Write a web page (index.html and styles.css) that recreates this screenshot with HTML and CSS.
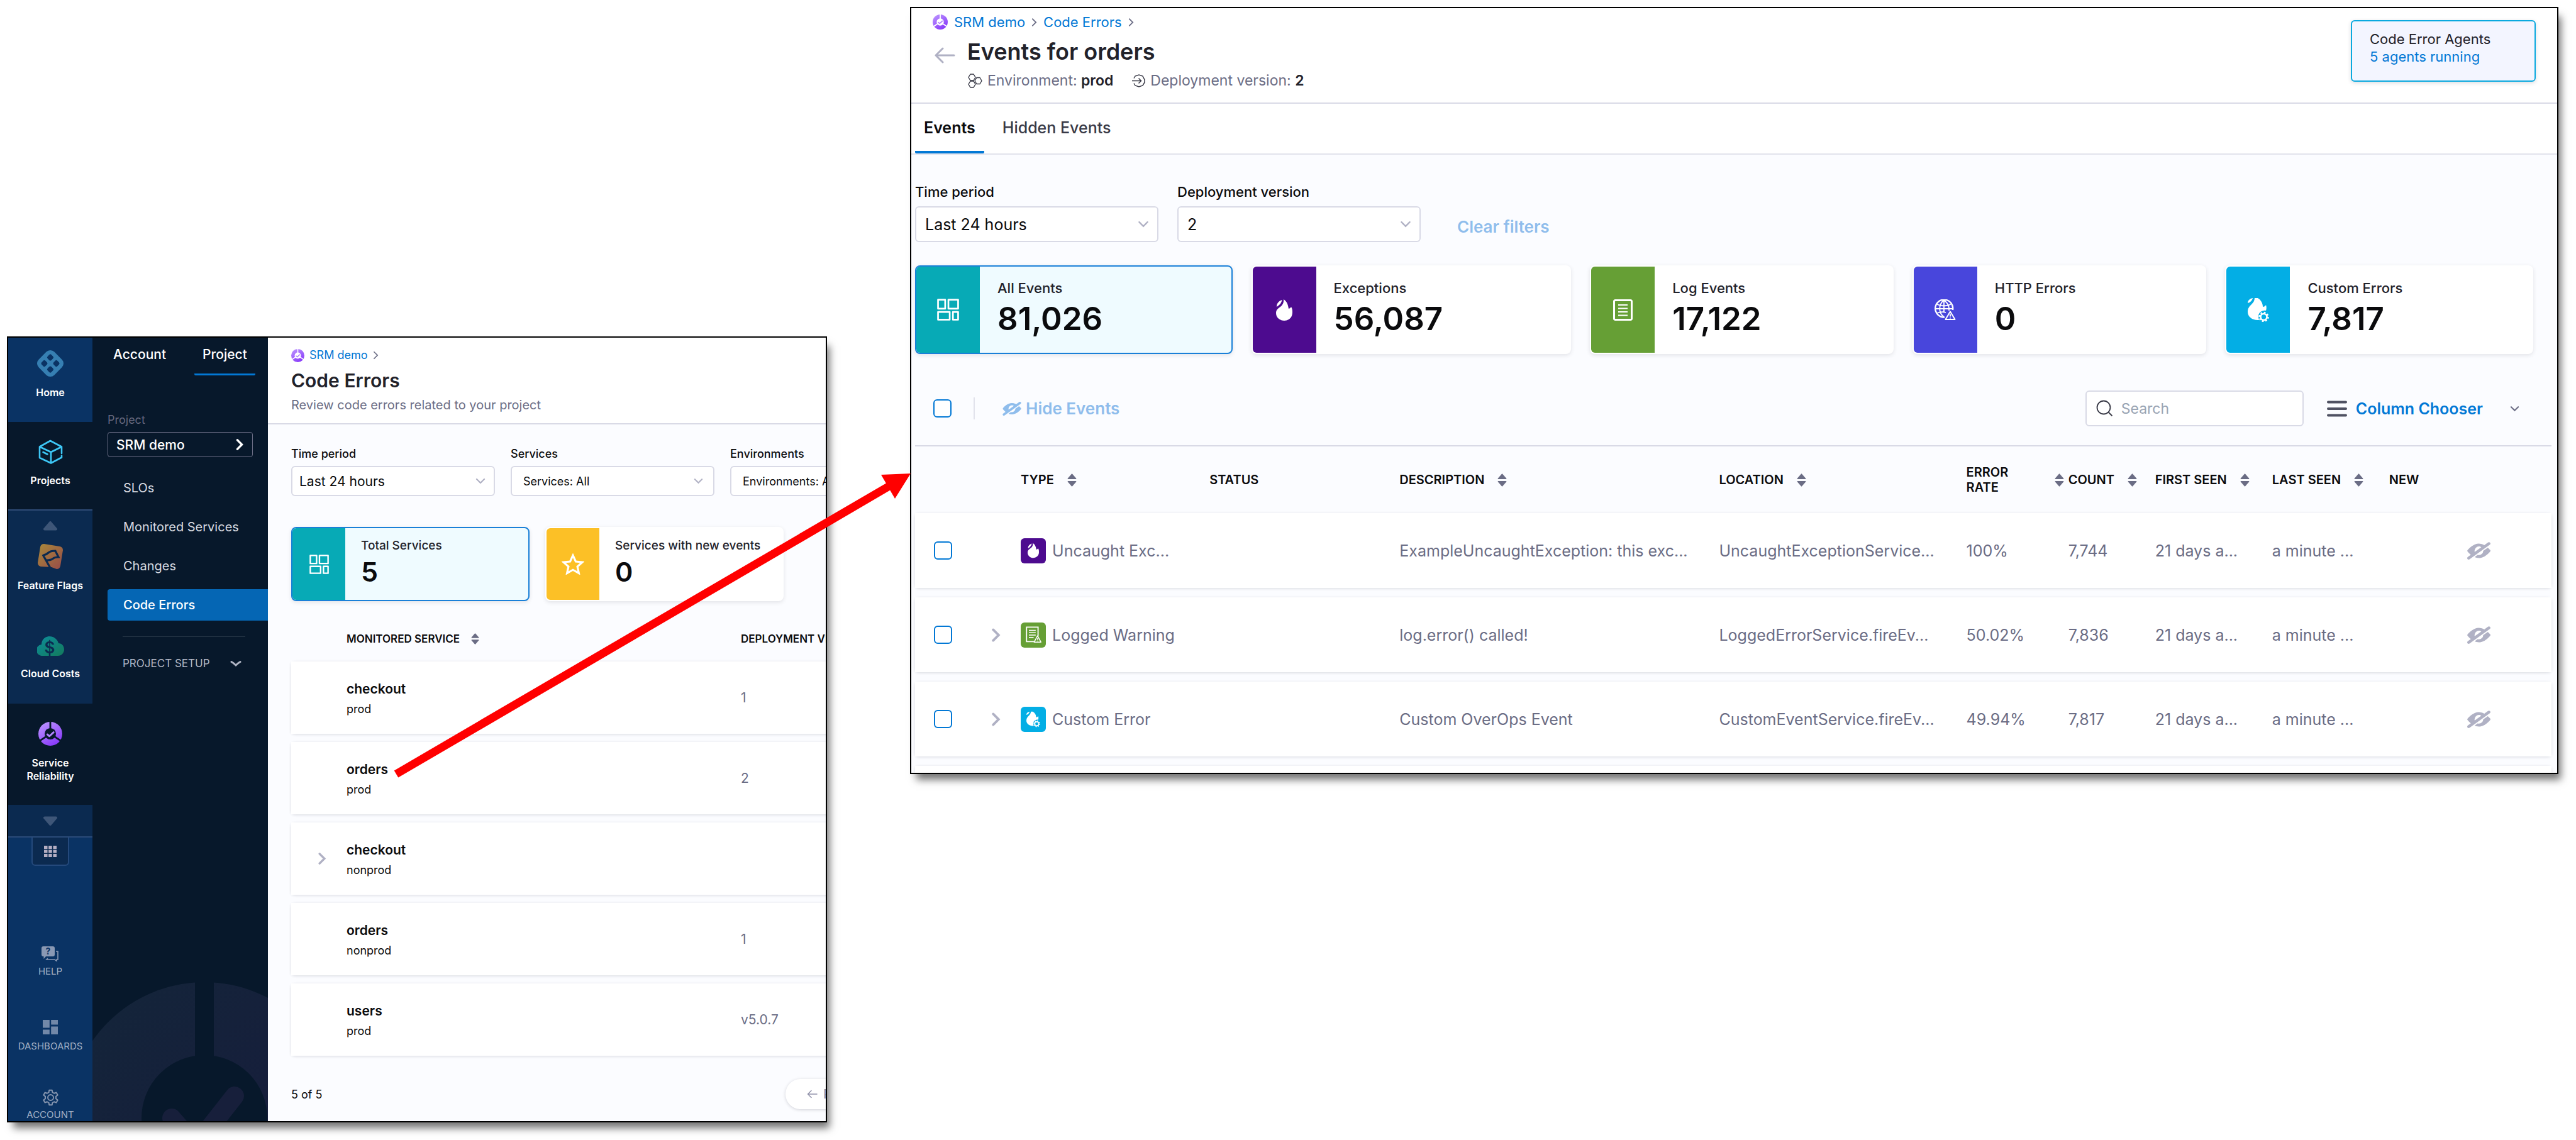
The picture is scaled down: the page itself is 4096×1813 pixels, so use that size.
FILE: index.html
```html
<!DOCTYPE html>
<html lang="en">
<head>
<meta charset="utf-8">
<title>Code Errors</title>
<link rel="stylesheet" href="styles.css">
</head>
<body>
<svg class="sprite" aria-hidden="true">
  <defs>
    <linearGradient id="violet" x1="0" y1="0" x2="0.6" y2="1"><stop offset="0" stop-color="#bf9bff"/><stop offset="1" stop-color="#8a3cfa"/></linearGradient>
    <linearGradient id="amber" x1="0" y1="0" x2="1" y2="1"><stop offset="0" stop-color="#a8893a"/><stop offset="1" stop-color="#974b49"/></linearGradient>
    <linearGradient id="sea" x1="0" y1="0" x2="1" y2="1"><stop offset="0" stop-color="#0d8d9b"/><stop offset="1" stop-color="#137a5c"/></linearGradient>
    <linearGradient id="dusk" x1="0" y1="0" x2="1" y2="1"><stop offset="0" stop-color="#14243a"/><stop offset="1" stop-color="#171b3c"/></linearGradient>
  </defs>
  <symbol id="srm" viewBox="0 0 40 40">
    <circle cx="20" cy="20" r="20" fill="url(#violet)"/>
    <path d="M20 20V-1M20 20L2 32M20 20l18 12" stroke="currentColor" stroke-width="3" fill="none"/>
    <circle cx="20" cy="20" r="9.5" fill="currentColor"/>
    <path d="M15 21l3.500 3 7-6.500" stroke="#b285ff" stroke-width="3" fill="none" stroke-linecap="round" stroke-linejoin="round"/>
  </symbol>
  <symbol id="tiles" viewBox="0 0 34 34">
    <g fill="none" stroke="currentColor" stroke-width="2.600" stroke-linejoin="round">
      <path d="M1.500 1.500h11v14h-11zM17.500 1.500h15v14h-15zM1.500 20.500h18v12h-18zM24.500 20.500h8v12h-8z"/>
    </g>
  </symbol>
  <symbol id="flame" viewBox="0 0 26 34">
    <path fill="currentColor" d="M12 0C17 3 19 8 20 15c2-.5 3-1.500 4-3 2 3 2 6 2 9 0 8-6 13-13 13S0 29 0 22c0-6 4-8 8-11 3-3 4.500-6.500 4-11z"/>
    <path fill="currentColor" d="M9.500 1C4 3 .5 7 1 12c4-2.500 7.500-5.500 8.500-11z"/>
  </symbol>
  <symbol id="flame-gear" viewBox="0 0 34 38">
    <path fill="currentColor" d="M11 0h5c5 3 8 8 8 14 2 0 4-1 5-3 1 3 1 6 0 9-6-1-12 3-12 9 0 2 .5 4 1 6C8 36 0 30 0 22c0-6 3-9 6-12s5-6 5-10z"/>
    <path fill="currentColor" d="M8 0C3 1 0 4 0 8c4-1 7-4 8-8z"/>
    <circle cx="25.500" cy="30" r="5" fill="none" stroke="currentColor" stroke-width="2.600"/>
    <circle cx="25.500" cy="30" r="7" fill="none" stroke="currentColor" stroke-width="2.400" stroke-dasharray="2.750 2.750"/>
  </symbol>
  <symbol id="log" viewBox="0 0 32 34">
    <rect x="1.500" y="1.500" width="28" height="31" rx="2" fill="none" stroke="currentColor" stroke-width="3"/>
    <path d="M8 9h15M8 14.500h15M8 20h15M8 25.500h15" stroke="currentColor" stroke-width="2"/>
  </symbol>
  <symbol id="log-warn" viewBox="0 0 30 32">
    <path d="M17 29H1.500V1.500h22V18" fill="none" stroke="currentColor" stroke-width="2.200"/>
    <path d="M6 7.500h13M6 12h13M6 16.500h13M6 21h9" stroke="currentColor" stroke-width="1.800"/>
    <path d="M22.500 18l6.500 12H16z" fill="none" stroke="currentColor" stroke-width="1.800" stroke-linejoin="round"/>
    <path d="M22.500 22.500v3.500M22.500 27.200v1.200" stroke="currentColor" stroke-width="1.500"/>
  </symbol>
  <symbol id="globe" viewBox="0 0 34 34">
    <g fill="none" stroke="currentColor" stroke-width="1.800">
      <path d="M16 28.500A14 14 0 1 1 29 17" stroke-width="2.400"/>
      <path d="M15 1c-9 8-9 20 0 27M15 1c7 6 9 11 8 17M15 1v20M1 15h28M4 8q11 5 22 0M4 22q7-3 14-1"/>
      <path d="M25 19.500L32.500 32h-15z" stroke-width="2" stroke-linejoin="round"/>
      <path d="M25 23.500v4M25 29v1.500"/>
    </g>
  </symbol>
  <symbol id="star" viewBox="0 0 34 32">
    <path d="M17 3l4.200 9.200 10 1-7.500 6.700 2.200 9.900L17 24.700l-8.900 5.100 2.200-9.900-7.500-6.700 10-1z" fill="none" stroke="currentColor" stroke-width="3"/>
  </symbol>
  <symbol id="eye-off" viewBox="0 0 16 12">
    <path transform="translate(0 -2)" fill="currentColor" d="M16 7.970v-.1a.675.675 0 00-.17-.36c-.49-.63-1.070-1.200-1.650-1.720l-3.160 2.260a2.978 2.978 0 01-2.980 2.900c-.31 0-.6-.06-.88-.15L5.090 12.300c.44.190.9.360 1.370.470.970.230 1.940.240 2.920.050.880-.17 1.740-.54 2.530-.98 1.250-.7 2.390-1.670 3.380-2.750.180-.2.370-.41.530-.62.090-.1.150-.22.170-.36v-.1zm-.43-4.170c.25-.18.430-.46.430-.8 0-.55-.45-1-1-1-.22 0-.41.080-.57.200l-.01-.01-2.670 1.910c-.69-.38-1.410-.69-2.170-.87a6.800 6.800 0 00-2.910-.05c-.88.180-1.740.540-2.530.990-1.250.7-2.390 1.670-3.380 2.750-.18.200-.37.410-.53.620-.23.290-.23.630-.01.920.510.660 1.110 1.250 1.730 1.790.180.160.380.290.560.440l-2.090 1.500.01.010c-.25.180-.43.460-.43.800 0 .55.450 1 1 1 .22 0 .41-.08.57-.2l.01.010 14-10-.01-.01zm-10.410 5a3.030 3.030 0 01-.11-.8 2.990 2.990 0 012.990-2.980c.62 0 1.190.210 1.660.530L5.160 8.800z"/>
  </symbol>
  <symbol id="sort" viewBox="0 0 14 20">
    <path d="M7 1.200L12.800 7.800H1.200zM7 18.800l5.800-6.600H1.200z" fill="currentColor" stroke="currentColor" stroke-width="1.600" stroke-linejoin="round"/>
  </symbol>
  <symbol id="down" viewBox="0 0 16 10">
    <path d="M2 2l6 6 6-6" fill="none" stroke="currentColor" stroke-width="2.200" stroke-linecap="round"/>
  </symbol>
  <symbol id="right" viewBox="0 0 10 16">
    <path d="M2 2l6 6-6 6" fill="none" stroke="currentColor" stroke-width="2" stroke-linecap="round"/>
  </symbol>
  <symbol id="right-bold" viewBox="0 0 14 22">
    <path d="M3 3l8 8-8 8" fill="none" stroke="currentColor" stroke-width="3.600" stroke-linecap="round"/>
  </symbol>
  <symbol id="back" viewBox="0 0 34 26">
    <path d="M32 13H3M14 2L3 13l11 11" fill="none" stroke="currentColor" stroke-width="3" stroke-linecap="round" stroke-linejoin="round"/>
  </symbol>
  <symbol id="triangle" viewBox="0 0 24 15">
    <path d="M12 2l9 10.500H3z" fill="currentColor" stroke="currentColor" stroke-width="4" stroke-linejoin="round"/>
  </symbol>
</svg>

<main class="canvas">

  <section class="window services" aria-label="Code Errors">
    <nav class="rail">
      <a class="tile tile-home" href="#">
        <svg width="46" height="46" viewBox="0 0 46 46"><g transform="rotate(45 23 23)"><rect x="5.500" y="5.500" width="35" height="35" rx="9" fill="#367fb2"/><g fill="#0a3364"><rect x="12" y="12" width="8.500" height="8.500" rx="2.500"/><rect x="25.500" y="12" width="8.500" height="8.500" rx="2.500"/><rect x="12" y="25.500" width="8.500" height="8.500" rx="2.500"/><rect x="25.500" y="25.500" width="8.500" height="8.500" rx="2.500"/></g></g></svg>
        <span>Home</span>
      </a>
      <a class="tile tile-projects" href="#">
        <svg width="39" height="39" viewBox="0 0 39 39" fill="none" stroke="#3dc7f6" stroke-width="2.600" stroke-linejoin="round" stroke-linecap="round"><path d="M37 22V11.500L19 2 2 11.500v17.500L20 37.500l17-9v-3M2 11.500L20 20l17-8.500M20 20v17.500M7.500 20l7 3.500"/></svg>
        <span>Projects</span>
      </a>
      <div class="rail-group">
        <svg class="rail-up" width="24" height="15"><use href="#triangle"/></svg>
        <a class="tile tile-flags" href="#">
          <svg width="40" height="40" viewBox="0 0 40 40"><path d="M10 0L35 4q5 1 5 6l-4 25q-1 5-6 5l-8-3L5 36q-5-1-5-6L4 5q1-5 6-5z" fill="url(#amber)"/><path d="M21 40L8 17M9 18q5-1 8-4t11-3l5 10q-6 0-9 2.500T14 26" fill="none" stroke="#0b2a50" stroke-width="3.200"/></svg>
          <span>Feature Flags</span>
        </a>
        <a class="tile tile-costs" href="#">
          <svg width="43" height="31" viewBox="0 0 43 31"><path d="M9 31a9 9 0 0 1-2-18C7 5 13 0 20 0c6 0 12 4 14 11 5 0 9 4 9 10 0 5-4 10-10 10z" fill="url(#sea)"/><path d="M20 24v8" stroke="#0b2a50" stroke-width="2.500"/><text x="20" y="27" font-size="26" font-weight="600" text-anchor="middle" fill="#0b2a50">$</text></svg>
          <span>Cloud Costs</span>
        </a>
      </div>
      <a class="tile tile-srm" href="#">
        <svg width="38" height="38"><use href="#srm"/></svg>
        <span>Service<br>Reliability</span>
      </a>
      <div class="rail-more"><svg class="flip" width="24" height="15"><use href="#triangle"/></svg></div>
      <button class="rail-grid" aria-label="All modules">
        <svg width="20" height="20" viewBox="0 0 20 20" fill="#b4aec2"><path d="M0 1h5.500v5H0zM7.200 1h5.500v5H7.200zM14.500 1H20v5h-5.500zM0 7.500h5.500v5H0zM7.200 7.500h5.500v5H7.200zM14.500 7.500H20v5h-5.500zM0 14h5.500v5H0zM7.200 14h5.500v5H7.200zM14.500 14H20v5h-5.500z"/></svg>
      </button>
      <a class="tool tool-help" href="#">
        <svg width="27" height="24" viewBox="0 0 27 24"><path d="M3 0h15q3 0 3 3v10q0 3-3 3H7l-3.500 4v-4H3q-3 0-3-3V3q0-3 3-3z" fill="#8a99b4"/><path d="M23 8h3v13h-2v2.500L21 21H8l2-2" fill="none" stroke="#8a99b4" stroke-width="1.600"/><text x="10.500" y="13" font-size="14" font-weight="700" text-anchor="middle" fill="#0a3364">?</text></svg>
        <span>HELP</span>
      </a>
      <a class="tool tool-dash" href="#">
        <svg width="24" height="23" viewBox="0 0 24 23" fill="#7288a8"><path d="M0 0h10.800v12.500H0zM13.200 0H24v7.500H13.200zM0 15.500h10.800V23H0zM13.200 10.500H24V23H13.200z"/></svg>
        <span>DASHBOARDS</span>
      </a>
      <a class="tool tool-account" href="#">
        <svg width="27" height="27" viewBox="0 0 24 24" fill="none" stroke="#8595af" stroke-width="1.700" stroke-linejoin="round"><path d="M10 1.500h4l.6 3.200 2.300 1.300 3.100-1.100 2 3.500-2.500 2.100v3l2.500 2.100-2 3.500-3.100-1.100-2.300 1.300-.6 3.200h-4l-.6-3.200L7.100 18 4 19.100l-2-3.500 2.500-2.100v-3L2 8.400l2-3.500L7.100 6l2.300-1.300z"/><circle cx="12" cy="12" r="4"/></svg>
        <span>ACCOUNT</span>
      </a>
    </nav>

    <nav class="side">
      <svg class="watermark" viewBox="0 0 432 432"><circle cx="216" cy="216" r="158" fill="none" stroke="url(#dusk)" stroke-width="116"/><path d="M216 0v130" stroke="#07182b" stroke-width="30"/><path d="M164 216l38 44 62-79" fill="none" stroke="#171f3b" stroke-width="30" stroke-linecap="round"/></svg>
      <div class="side-tabs"><a href="#">Account</a><a class="on" href="#">Project</a></div>
      <p class="side-label">Project</p>
      <button class="side-picker"><span>SRM demo</span><svg width="14" height="20"><use href="#right-bold"/></svg></button>
      <ul class="side-list">
        <li><a href="#">SLOs</a></li>
        <li><a href="#">Monitored Services</a></li>
        <li><a href="#">Changes</a></li>
        <li><a class="on" href="#">Code Errors</a></li>
      </ul>
      <button class="side-setup"><span>PROJECT SETUP</span><svg width="18" height="11" viewBox="0 0 18 11"><path d="M2 2.500q3.500 2 7 5.500 3.500-3.500 7-5.500" fill="none" stroke="currentColor" stroke-width="3" stroke-linecap="round"/></svg></button>
    </nav>

    <div class="pane">
      <header class="pane-head">
        <div class="crumbs"><svg width="21" height="21"><use href="#srm"/></svg><a href="#">SRM demo</a><svg class="crumb-sep" width="9" height="14"><use href="#right"/></svg></div>
        <h1>Code Errors</h1>
        <p>Review code errors related to your project</p>
      </header>
      <div class="filters">
        <div class="field"><label for="s-time">Time period</label><div class="select"><select id="s-time"><option>Last 24 hours</option></select><svg width="16" height="10"><use href="#down"/></svg></div></div>
        <div class="field"><label for="s-services">Services</label><div class="select small"><select id="s-services"><option>Services: All</option></select><svg width="15" height="10"><use href="#down"/></svg></div></div>
        <div class="field"><label for="s-env">Environments</label><div class="select small"><select id="s-env"><option>Environments: All</option></select><svg width="15" height="10"><use href="#down"/></svg></div></div>
      </div>
      <div class="cards">
        <button class="card on"><span class="badge teal"><svg width="31" height="31"><use href="#tiles"/></svg></span><span class="card-text"><span class="card-label">Total Services</span><span class="card-value">5</span></span></button>
        <button class="card"><span class="badge yellow"><svg width="36" height="34"><use href="#star"/></svg></span><span class="card-text"><span class="card-label">Services with new events</span><span class="card-value">0</span></span></button>
      </div>
      <table class="grid">
        <colgroup><col class="c-expand"><col class="c-service"><col></colgroup>
        <thead><tr><th></th><th><span class="th">MONITORED SERVICE <svg width="13" height="18"><use href="#sort"/></svg></span></th><th>DEPLOYMENT VERSION</th></tr></thead>
        <tbody>
          <tr><td></td><td><b>checkout</b><small>prod</small></td><td>1</td></tr>
          <tr><td></td><td><b>orders</b><small>prod</small></td><td>2</td></tr>
          <tr><td><svg class="expand" width="14" height="21"><use href="#right-bold"/></svg></td><td><b>checkout</b><small>nonprod</small></td><td></td></tr>
          <tr><td></td><td><b>orders</b><small>nonprod</small></td><td>1</td></tr>
          <tr><td></td><td><b>users</b><small>prod</small></td><td>v5.0.7</td></tr>
        </tbody>
      </table>
      <footer class="pager"><span>5 of 5</span><button><svg width="17" height="14" viewBox="0 0 34 26"><use href="#back"/></svg>Prev</button></footer>
    </div>
  </section>

  <section class="window events" aria-label="Events for orders">
    <header class="ev-head">
      <div class="ev-lead">
        <div class="crumbs"><svg width="24" height="24"><use href="#srm"/></svg><a href="#">SRM demo</a><svg class="crumb-sep" width="9" height="15"><use href="#right"/></svg><a href="#">Code Errors</a><svg class="crumb-sep" width="9" height="15"><use href="#right"/></svg></div>
        <div class="ev-title"><a class="ev-back" href="#" aria-label="Back"><svg width="34" height="26"><use href="#back"/></svg></a><h1>Events for orders</h1></div>
        <div class="ev-meta">
          <svg width="23" height="23" viewBox="0 0 23 23" fill="none" stroke="#383946" stroke-width="1.300"><path d="M4 1h5l3 5-3 5H4L1 6zM4 12h5l3 5-3 5H4l-3-5zM14 6.500h5l3 5-3 5h-5l-3-5z"/></svg>
          <span>Environment: <b>prod</b></span>
          <svg class="ev-deploy" width="21" height="21" viewBox="0 0 21 21" fill="none" stroke="#383946" stroke-width="1.500"><path d="M3 6.500L5 3l6-2 6 2 3 6v4l-3 5-6 2-6-2-2-3.500M0 10.500h14M10.500 6.500l4 4-4 4"/></svg>
          <span>Deployment version: <b>2</b></span>
        </div>
      </div>
      <aside class="agents"><span>Code Error Agents</span><a href="#">5 agents running</a></aside>
    </header>
    <nav class="ev-tabs"><a class="on" href="#">Events</a><a href="#">Hidden Events</a></nav>
    <div class="ev-body">
      <div class="filters">
        <div class="field"><label for="e-time">Time period</label><div class="select"><select id="e-time"><option>Last 24 hours</option></select><svg width="18" height="11"><use href="#down"/></svg></div></div>
        <div class="field"><label for="e-ver">Deployment version</label><div class="select"><select id="e-ver"><option>2</option></select><svg width="18" height="11"><use href="#down"/></svg></div></div>
        <button class="clear">Clear filters</button>
      </div>
      <div class="cards">
        <button class="card on"><span class="badge teal"><svg width="35" height="35"><use href="#tiles"/></svg></span><span class="card-text"><span class="card-label">All Events</span><span class="card-value">81,026</span></span></button>
        <button class="card"><span class="badge purple"><svg width="26" height="34"><use href="#flame"/></svg></span><span class="card-text"><span class="card-label">Exceptions</span><span class="card-value">56,087</span></span></button>
        <button class="card"><span class="badge green"><svg width="32" height="34"><use href="#log"/></svg></span><span class="card-text"><span class="card-label">Log Events</span><span class="card-value">17,122</span></span></button>
        <button class="card"><span class="badge indigo"><svg width="34" height="34"><use href="#globe"/></svg></span><span class="card-text"><span class="card-label">HTTP Errors</span><span class="card-value">0</span></span></button>
        <button class="card"><span class="badge sky"><svg width="34" height="38"><use href="#flame-gear"/></svg></span><span class="card-text"><span class="card-label">Custom Errors</span><span class="card-value">7,817</span></span></button>
      </div>
      <div class="toolbar">
        <input class="tick" type="checkbox" aria-label="Select all events">
        <span class="rule"></span>
        <button class="hide"><svg width="30" height="22"><use href="#eye-off"/></svg>Hide Events</button>
        <label class="search"><svg width="27" height="27" viewBox="0 0 27 27" fill="none" stroke="#383946" stroke-width="1.800"><circle cx="12" cy="12" r="10.500"/><path d="M19.500 19.500l6 6"/></svg><input type="text" placeholder="Search" aria-label="Search"></label>
        <button class="chooser"><svg width="32" height="26" viewBox="0 0 32 26"><path d="M2 2.500h28M2 13h28M2 23.500h28" stroke="#4f5162" stroke-width="4" stroke-linecap="round"/></svg><span>Column Chooser</span><svg class="chooser-caret" width="15" height="10"><use href="#down"/></svg></button>
      </div>
      <table class="grid">
        <colgroup><col class="e1"><col class="e2"><col class="e3"><col class="e4"><col class="e5"><col class="e6"><col class="e7"><col class="e8"><col class="e9"><col class="e9"><col class="e10"><col class="e11"></colgroup>
        <thead><tr><th></th><th></th>
          <th><span class="th">TYPE <svg width="15" height="21"><use href="#sort"/></svg></span></th>
          <th>STATUS</th>
          <th><span class="th">DESCRIPTION <svg width="15" height="21"><use href="#sort"/></svg></span></th>
          <th><span class="th">LOCATION <svg width="15" height="21"><use href="#sort"/></svg></span></th>
          <th><span class="th spread"><span>ERROR<br>RATE</span> <svg width="15" height="21"><use href="#sort"/></svg></span></th>
          <th><span class="th">COUNT <svg width="15" height="21"><use href="#sort"/></svg></span></th>
          <th><span class="th">FIRST SEEN <svg width="15" height="21"><use href="#sort"/></svg></span></th>
          <th><span class="th">LAST SEEN <svg width="15" height="21"><use href="#sort"/></svg></span></th>
          <th>NEW</th><th></th></tr></thead>
        <tbody>
          <tr><td><input class="tick" type="checkbox" aria-label="Uncaught Exception"></td><td></td><td><span class="kind"><i class="purple"><svg width="18" height="25"><use href="#flame"/></svg></i>Uncaught Exc...</span></td><td></td><td>ExampleUncaughtException: this exc...</td><td>UncaughtExceptionService...</td><td>100%</td><td>7,744</td><td>21 days a...</td><td>a minute ...</td><td></td><td><svg class="eye" width="37" height="28"><use href="#eye-off"/></svg></td></tr>
          <tr><td><input class="tick" type="checkbox" aria-label="Logged Warning"></td><td><svg class="expand" width="15" height="24"><use href="#right-bold"/></svg></td><td><span class="kind"><i class="green"><svg width="25" height="27"><use href="#log-warn"/></svg></i>Logged Warning</span></td><td></td><td>log.error() called!</td><td>LoggedErrorService.fireEv...</td><td>50.02%</td><td>7,836</td><td>21 days a...</td><td>a minute ...</td><td></td><td><svg class="eye" width="37" height="28"><use href="#eye-off"/></svg></td></tr>
          <tr><td><input class="tick" type="checkbox" aria-label="Custom Error"></td><td><svg class="expand" width="15" height="24"><use href="#right-bold"/></svg></td><td><span class="kind"><i class="sky"><svg width="22" height="26"><use href="#flame-gear"/></svg></i>Custom Error</span></td><td></td><td>Custom OverOps Event</td><td>CustomEventService.fireEv...</td><td>49.94%</td><td>7,817</td><td>21 days a...</td><td>a minute ...</td><td></td><td><svg class="eye" width="37" height="28"><use href="#eye-off"/></svg></td></tr>
          <tr class="next"><td colspan="12"></td></tr>
        </tbody>
      </table>
    </div>
  </section>

  <svg class="arrow" viewBox="0 0 830 500" aria-hidden="true"><path d="M11 484L795 26" stroke="#ff0000" stroke-width="13"/><path d="M829 6l-25 40-22-38z" fill="#ff0000"/></svg>
</main>
</body>
</html>
```
FILE: styles.css
```css
* { box-sizing: border-box; }
body { margin: 0; background: #fff; color: #0b0b0d; font-family: Inter, "Liberation Sans", sans-serif; }
h1, p, ul { margin: 0; padding: 0; }
ul { list-style: none; }
a { color: inherit; text-decoration: none; }
button { padding: 0; border: 0; background: none; color: inherit; font: inherit; text-align: left; }
svg { display: block; flex: none; }
.sprite { position: absolute; width: 0; height: 0; }

.canvas {
  position: relative;
  display: grid;
  grid-template-columns: minmax(0, 1304fr) minmax(0, 2621fr);
  grid-template-rows: 100%;
  column-gap: 132px;
  height: 100vh;
  padding: 11px 28px 28px 11px;
  overflow: hidden;
}
.window {
  overflow: hidden;
  border: 2px solid #000;
  background: #fbfcff;
  box-shadow: 7px 12px 12px -3px rgba(0, 0, 0, .55);
}
.services { display: flex; margin-top: 524px; }
.events { align-self: start; }
.arrow { position: absolute; left: 619px; top: 747px; width: 830px; height: 500px; }

/* module rail */
.rail { display: flex; flex: none; flex-direction: column; align-items: center; width: 134px; background: #0a3364; color: #fff; }
.tile { display: flex; flex-direction: column; align-items: center; width: 100%; font-size: 16px; font-weight: 600; line-height: 20px; text-align: center; }
.tile-home { height: 134px; padding-top: 18px; gap: 13px; }
.tile-projects { height: 142px; padding-top: 28px; gap: 16px; border-bottom: 2px solid #2f4b76; background: #07182b; }
.rail-group { width: 100%; height: 307px; padding-top: 17px; background: #0b2a50; }
.rail-up, .rail-more { color: #3e5678; }
.rail-up { margin: 0 auto 21px; }
.tile-flags { gap: 16px; margin-bottom: 71px; }
.tile-costs { gap: 18px; }
.tile-srm { height: 162px; padding-top: 29px; gap: 17px; background: #07182b; line-height: 21px; }
.tile-srm svg { color: #07182b; }
.rail-more { display: flex; justify-content: center; width: 100%; height: 52px; padding-top: 18px; border-bottom: 2px solid #2a4a78; background: #0b2a50; }
.flip { transform: rotate(180deg); }
.rail-grid { display: flex; justify-content: center; width: 60px; height: 45px; margin-bottom: 128px; padding-top: 12px; border: 2px solid #24497c; border-top: 0; border-radius: 0 0 6px 6px; background: #0b2a50; }
.tool { display: flex; flex-direction: column; align-items: center; color: #a3b0c5; font-size: 15px; line-height: 20px; }
.tool-help { gap: 6px; margin-bottom: 67px; }
.tool-dash { gap: 9px; margin-bottom: 58px; }
.tool-account { gap: 4px; }

/* project navigation */
.side { position: relative; flex: none; width: 279px; padding-left: 24px; overflow: hidden; background: #07182b; color: #fff; }
.watermark { position: absolute; left: -38px; top: 1025px; width: 432px; height: 432px; }
.side-tabs { display: flex; gap: 32px; margin-left: -4px; }
.side-tabs a { padding: 13px 13px 16px; border-bottom: 3px solid transparent; border-radius: 2px; font-size: 21px; font-weight: 500; line-height: 28px; }
.side-tabs .on { border-color: #0278d5; }
.side-label { margin: 59px 0 7px; color: #65677d; font-size: 18px; line-height: 24px; }
.side-picker { display: flex; align-items: center; justify-content: space-between; width: 231px; height: 40px; padding: 0 13px; border: 1px solid #6b6d85; border-radius: 4px; font-size: 21px; font-weight: 500; }
.side-list { display: grid; gap: 12px; margin: 24px 0 25px; }
.side-list a { display: block; padding-left: 25px; border-radius: 4px 0 0 4px; color: #d8dbe1; font-size: 20px; font-weight: 400; line-height: 50px; }
.side-list .on { background: #0566b4; color: #fff; font-weight: 500; }
.side-setup { display: flex; align-items: center; justify-content: space-between; width: 195px; margin-left: 24px; padding: 31px 6px 0 0; border-top: 1px solid #263647; color: #b0b5c4; font-size: 17px; line-height: 22px; }

/* shared page parts */
.crumbs { display: flex; align-items: center; color: #fff; }
.crumbs a { color: #0278d5; }
.crumb-sep { color: #6b6d85; }
h1 { color: #22222a; font-weight: 600; }
.filters { display: flex; align-items: flex-end; }
.field { flex: none; }
.field label { display: block; font-weight: 500; }
.select { display: grid; align-items: center; color: #b0b1c4; }
.select > * { grid-area: 1 / 1; }
.select svg { justify-self: end; margin-right: 15px; pointer-events: none; }
.select select { width: 100%; border: 2px solid #d9dae6; border-radius: 6px; background: #fff; color: #0b0b0d; font-family: inherit; appearance: none; }
.cards { display: grid; }
.card { display: flex; padding: 0; border: 2px solid #fff; border-radius: 8px; background: #fff; box-shadow: 0 2px 6px rgba(40, 41, 61, .12); }
.card.on { border-color: #1a80d8; background: #effbff; }
.badge { display: flex; flex: none; align-items: center; justify-content: center; border-radius: 6px 0 0 6px; color: #fff; }
.card-label, .card-value { display: block; white-space: nowrap; }
.card-label { color: #22222a; font-weight: 500; }
.card-value { font-weight: 600; }
.teal { background: #07aab6; }
.yellow { background: #fcc026; }
.purple { background: #4d0b8f; }
.green { background: #669f35; }
.indigo { background: #4846dc; }
.sky { background: #03aee5; }
.grid { width: 100%; table-layout: fixed; border-collapse: separate; color: #6b6d85; }
.grid th, .grid td { padding: 0; text-align: left; vertical-align: middle; white-space: nowrap; }
.grid th { color: #0b0b0d; font-weight: 600; }
.grid tbody tr { border-radius: 6px; background: #fff; box-shadow: 0 1px 4px rgba(40, 41, 61, .16); }
.th { display: flex; align-items: center; }
.th svg { color: #6b6d85; }
.expand { color: #b0b1c4; }

/* services page */
.pane { flex: none; width: 1500px; }
.pane-head { padding: 16px 37px 16px; border-bottom: 2px solid #d9dae6; background: #fff; }
.services .crumbs { gap: 8px; font-size: 18px; line-height: 24px; }
.services h1 { margin: 10px 0 8px; font-size: 30px; line-height: 36px; }
.pane-head p { color: #6b6d85; font-size: 20px; line-height: 26px; }
.services .filters { gap: 25px; padding: 35px 37px 49px; }
.services .field { width: 324px; font-size: 18px; line-height: 24px; }
.services .field label { margin-bottom: 7px; }
.services select { height: 48px; padding: 0 11px; font-size: 21px; }
.services .small select { padding: 0 18px; font-size: 18px; }
.services .small svg { margin-right: 18px; }
.services .cards { grid-template-columns: 379px 379px; gap: 25px; padding-left: 37px; }
.services .card { height: 118px; }
.services .badge { width: 84px; height: 114px; }
.services .card-text { padding: 17px 0 0 25px; }
.services .card-label { margin-bottom: 8px; font-size: 19px; line-height: 22px; }
.services .card-value { font-size: 43px; line-height: 44px; }
.services .grid { width: 1424px; margin: 24px 37px 0; border-spacing: 0 13px; }
.c-expand { width: 88px; }
.c-service { width: 627px; }
.services th { height: 46px; font-size: 17px; }
.services .th { gap: 18px; }
.services td { height: 115px; font-size: 21px; }
.services td b { display: block; padding-top: 4px; color: #0b0b0d; font-size: 21px; font-weight: 600; line-height: 28px; }
.services td small { display: block; margin-top: 4px; color: #0b0b0d; font-size: 18px; line-height: 28px; }
.services .expand { margin-left: 42px; }
.pager { display: flex; align-items: center; margin: 24px 0 0 37px; font-size: 18px; }
.pager span { width: 786px; }
.pager button { display: flex; align-items: center; gap: 9px; width: 150px; height: 48px; padding-left: 34px; border-radius: 24px; background: #fff; box-shadow: 0 1px 5px rgba(40, 41, 61, .2); color: #9293ab; font-size: 20px; font-weight: 500; }

/* events page */
.ev-head { display: flex; justify-content: space-between; align-items: flex-start; padding: 8px 34px 21px; border-bottom: 2px solid #d9dae6; background: #fff; }
.events .crumbs { gap: 10px; font-size: 22px; line-height: 28px; }
.ev-title { display: flex; align-items: center; gap: 19px; margin: 11px 0 10px; }
.ev-back { padding: 12px 0 0 2px; color: #b0b1c4; }
.events h1 { font-size: 36px; line-height: 44px; }
.ev-meta { display: flex; align-items: center; gap: 8px; padding-left: 56px; color: #6b6d85; font-size: 23px; line-height: 28px; }
.ev-meta b { color: #22222a; font-weight: 600; }
.ev-deploy { margin-left: 22px; }
.agents { display: grid; align-content: start; width: 294px; height: 98px; margin-top: 11px; padding: 14px 28px; border: 2px solid #0aa9df; border-radius: 6px; background: #f3f5ff; box-shadow: 0 2px 6px rgba(40, 41, 61, .16); color: #22222a; font-size: 22px; line-height: 28px; }
.agents a { color: #0278d5; }
.ev-tabs { display: flex; gap: 15px; padding-left: 6px; border-bottom: 2px solid #e2e3ec; background: #fff; }
.ev-tabs a { padding: 2px 14px 0; border-bottom: 4px solid transparent; border-radius: 2px; color: #383946; font-size: 25px; font-weight: 500; line-height: 73px; }
.ev-tabs .on { border-color: #0278d5; color: #0b0b0d; font-weight: 600; }
.ev-body { padding: 47px 9px 0 6px; overflow: hidden; }
.events .filters { gap: 30px; }
.events .field { width: 387px; font-size: 22px; line-height: 24px; }
.events .field label { margin-bottom: 11px; }
.events select { height: 57px; padding: 0 14px; font-size: 25px; }
.clear { margin-left: 28px; color: #8fbdec; font-size: 26px; font-weight: 600; line-height: 48px; }
.events .cards { grid-template-columns: 505fr 509fr 483fr 468fr 490fr; gap: 30px; margin: 37px 29px 58px 0; }
.events .card { height: 141px; }
.events .badge { width: 101px; height: 137px; }
.events .card-text { padding: 22px 0 0 28px; }
.events .card-label { margin-bottom: 9px; font-size: 22px; line-height: 24px; }
.events .card-value { font-size: 51px; line-height: 56px; }
.toolbar { display: flex; align-items: center; padding: 0 51px 30px 29px; border-bottom: 2px solid #d9dae6; }
.tick { display: block; flex: none; width: 29px; height: 29px; margin: 0; border: 2px solid #0278d5; border-radius: 6px; background: #fff; appearance: none; }
.rule { width: 2px; height: 35px; margin: 0 44px 0 35px; background: #e2e3ec; }
.hide { display: flex; align-items: center; gap: 7px; color: #8fbdec; font-size: 26px; font-weight: 600; }
.search { display: flex; align-items: center; gap: 13px; width: 347px; height: 57px; margin: 0 37px 0 auto; padding-left: 15px; border: 2px solid #d9dae6; border-radius: 6px; background: #fff; }
.search input { width: 260px; padding: 0; border: 0; outline: 0; background: none; font: 23px Inter, "Liberation Sans", sans-serif; }
.search input::placeholder { color: #9aa5b4; }
.chooser { display: flex; align-items: center; gap: 14px; color: #0278d5; font-size: 25px; font-weight: 600; }
.chooser-caret { margin-left: 29px; color: #6b6d85; }
.events .grid { margin-bottom: -15px; border-spacing: 0 15px; }
.e1 { width: 121px; }
.e2 { width: 47px; }
.e3 { width: 300px; }
.e4 { width: 302px; }
.e5 { width: 508px; }
.e6 { width: 393px; }
.e7 { width: 162px; }
.e8 { width: 138px; }
.e9 { width: 186px; }
.e10 { width: 124px; }
.e11 { width: 134px; }
.events th { height: 76px; font-size: 20px; line-height: 24px; }
.events .th { gap: 21px; }
.events .spread { justify-content: space-between; padding-right: 7px; }
.events td { height: 119px; font-size: 25px; }
.events td .tick { margin-left: 30px; }
.kind { display: flex; align-items: center; gap: 10px; }
.kind i { display: flex; align-items: center; justify-content: center; width: 40px; height: 40px; border-radius: 6px; color: #fff; font-style: normal; }
.eye { color: #b0b1c4; }
.events .next td { height: 11px; }
```
